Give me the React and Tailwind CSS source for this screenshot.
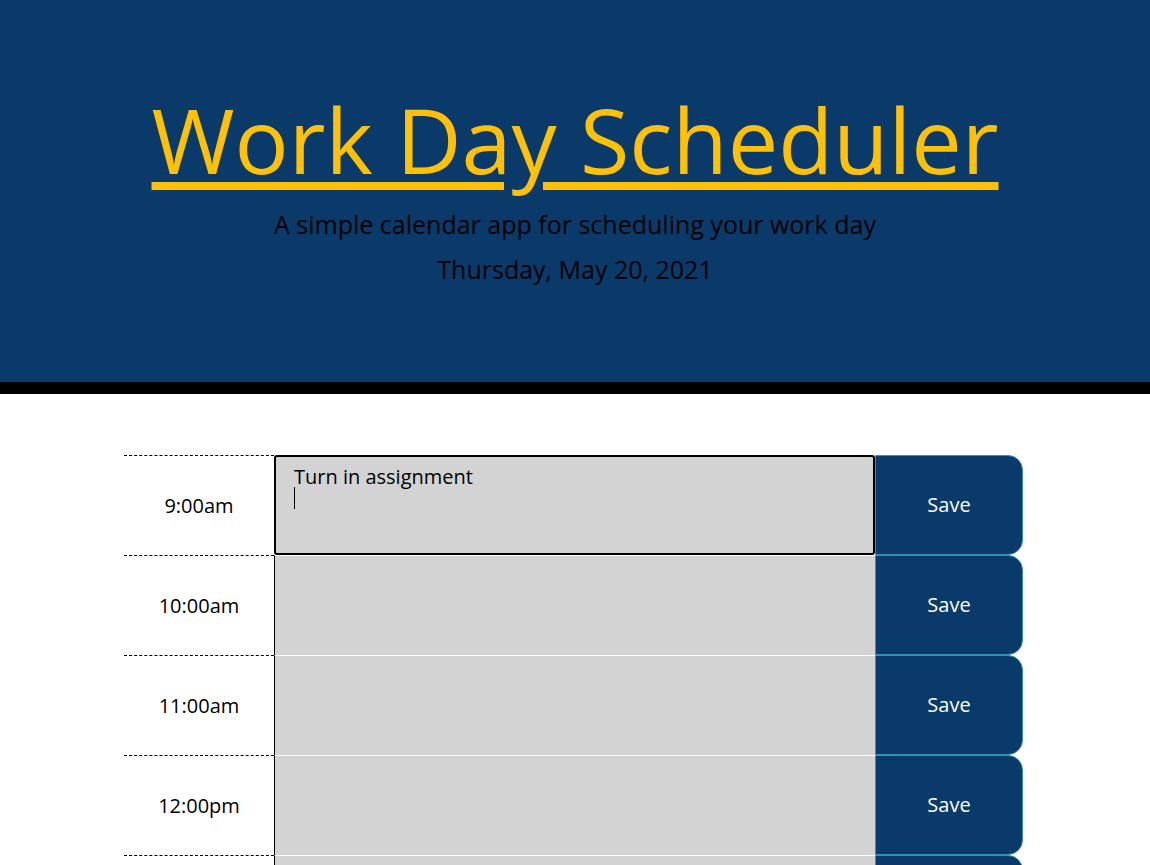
import { useState } from 'react';

const hours = ['9:00am', '10:00am', '11:00am', '12:00pm', '1:00pm', '2:00pm', '3:00pm', '4:00pm', '5:00pm'];

function HourRow({ label, value, focused }) {
  return (
    <div className="flex h-[100px]">
      <div className="w-[150px] shrink-0 border-t border-dashed border-black flex items-center justify-center text-[20px] text-black">
        {label}
      </div>
      <div
        className={
          focused
            ? 'flex-1 bg-[#d3d3d3] border-2 border-black rounded-[3px] px-[18px] pt-[8px] text-[20px] leading-[24px] text-black'
            : 'flex-1 bg-[#d3d3d3] border-l border-l-black border-t border-t-white'
        }
      >
        {focused && (
          <>
            <div>{value}</div>
            <div className="w-px h-[22px] bg-black -mt-[2px]" />
          </>
        )}
      </div>
      <button className="w-[148px] shrink-0 bg-[#093a69] border border-[#2f93ad] rounded-tr-[15px] rounded-br-[15px] text-white text-[20px]">
        Save
      </button>
    </div>
  );
}

export default function App() {
  const [items] = useState({ '9:00am': 'Turn in assignment' });

  return (
    <div className="min-h-screen bg-white font-['Open_Sans',sans-serif]">
      <header className="h-[394px] bg-[#093a69] border-b-[12px] border-black flex flex-col items-center pt-[86px]">
        <h1 className="text-[90px] leading-[106px] text-[#ffc107] underline decoration-[8px] underline-offset-[8px]">
          Work Day Scheduler
        </h1>
        <p className="mt-[16px] text-[25px] leading-[32px] text-black">
          A simple calendar app for scheduling your work day
        </p>
        <p className="mt-[13px] text-[25px] leading-[32px] text-black">Thursday, May 20, 2021</p>
      </header>

      <main className="w-[899px] ml-[124px] pt-[61px] pb-10">
        {hours.map((h) => (
          <HourRow key={h} label={h} value={items[h]} focused={h === '9:00am'} />
        ))}
      </main>
    </div>
  );
}
